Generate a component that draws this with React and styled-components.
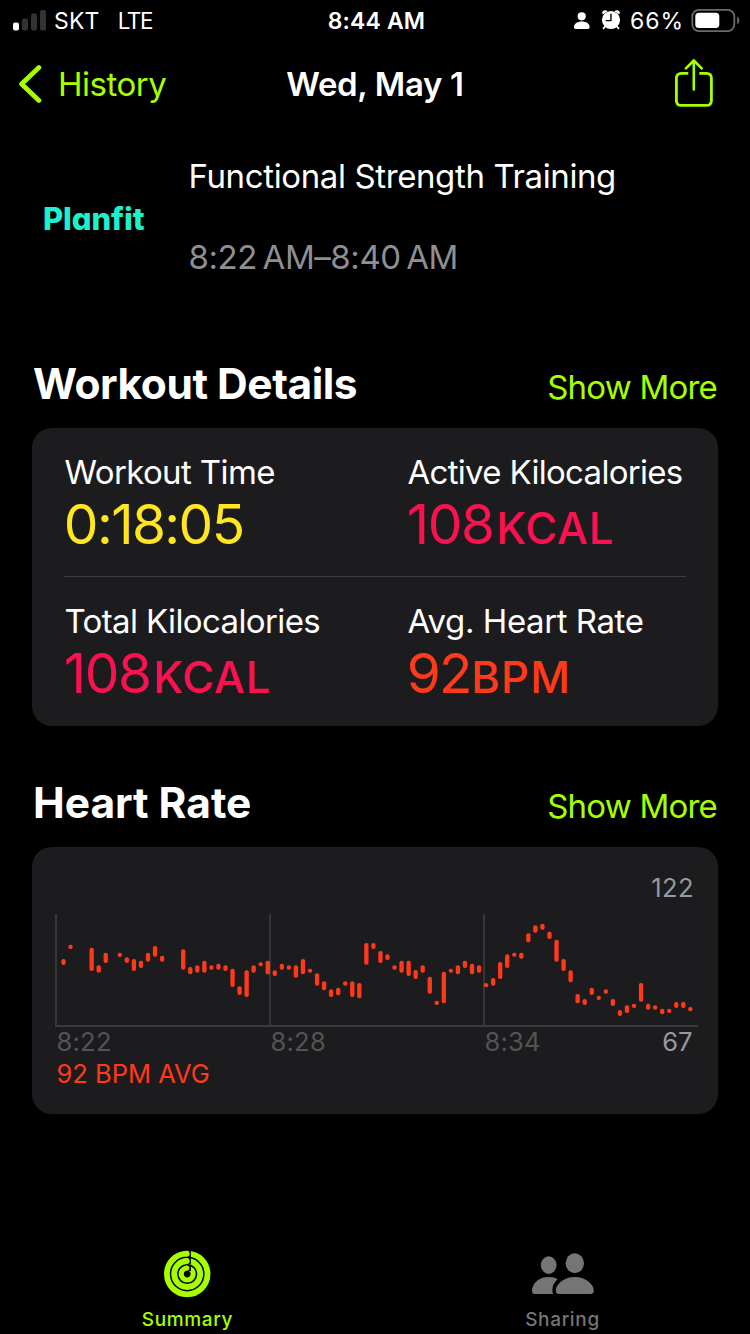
import React from "react";
import styled, {createGlobalStyle} from 'styled-components'

const GREEN = '#a6ff00';
const PINK = '#fa114f';
const RED = '#ff3a1b';
const YELLOW = '#ffe620';

// slot, top, bottom - slots are 21.13 units apart
const heartRate = [
    [0, 177, 195], [1, 134, 147], [4, 143, 213], [5, 196, 218], [6, 158, 189], [8, 158, 171], [9, 172, 189],
    [10, 177, 213], [11, 182, 204], [12, 158, 185], [13, 138, 170], [14, 167, 185], [17, 148, 209],
    [18, 201, 223], [19, 196, 218], [20, 182, 218], [21, 196, 209], [22, 191, 209], [23, 196, 213],
    [24, 206, 261], [25, 259, 285], [26, 211, 291], [27, 196, 218], [28, 187, 199], [29, 182, 223],
    [30, 211, 228], [31, 191, 209], [32, 196, 209], [33, 196, 233], [34, 177, 223], [35, 206, 218],
    [36, 220, 257], [37, 244, 271], [38, 268, 291], [39, 263, 286], [40, 244, 257], [41, 244, 291],
    [42, 249, 295], [43, 129, 194], [44, 129, 147], [45, 153, 189], [46, 163, 180], [47, 196, 209],
    [48, 182, 218], [49, 182, 228], [50, 210, 237], [51, 196, 218], [52, 230, 281], [53, 302, 315],
    [54, 215, 310], [55, 206, 218], [56, 196, 223], [57, 182, 204], [58, 191, 223], [59, 196, 218],
    [60, 249, 262], [61, 234, 257], [62, 186, 237], [63, 163, 204], [64, 158, 170], [65, 158, 176],
    [66, 100, 127], [67, 76, 98], [68, 71, 89], [69, 95, 117], [70, 119, 185], [71, 177, 213],
    [72, 211, 247], [73, 282, 310], [74, 297, 315], [75, 263, 285], [76, 287, 300], [77, 268, 281],
    [78, 297, 318], [79, 330, 348], [80, 316, 339], [81, 311, 324], [82, 249, 305], [83, 311, 329],
    [84, 316, 329], [85, 326, 343], [86, 326, 339], [87, 306, 324], [88, 306, 324], [89, 321, 334],
];

const SignalIcon = () => (
    <svg width="34" height="22" viewBox="0 0 34 22">
        <rect x="0" y="12.5" width="6" height="8" rx="2" fill="#fff" />
        <rect x="9" y="8.5" width="6" height="12" rx="2" fill="#333" />
        <rect x="18" y="3.5" width="6" height="17" rx="2" fill="#333" />
        <rect x="27" y="0" width="6" height="20.5" rx="2" fill="#333" />
    </svg>
);

const StatusIcons = () => (
    <svg width="50" height="24" viewBox="572 9 50 24">
        <circle cx="581.7" cy="16.3" r="4.1" fill="#fff" />
        <path d="M574 27.2C574 23.6 577.4 21.5 581.8 21.5S589.6 23.6 589.6 27.2Q589.6 29 588 29H575.6Q574 29 574 27.2Z" fill="#fff" />
        <circle cx="611" cy="20" r="9.1" fill="#fff" />
        <path d="M602.6 14.4Q601.4 11.4 604 10.5Q605.8 9.9 607.6 11.2ZM619.4 14.4Q620.6 11.4 618 10.5Q616.2 9.9 614.4 11.2Z" fill="#fff" />
        <path d="M605.5 26L603.5 28.3M616.5 26L618.5 28.3" stroke="#fff" strokeWidth="1.8" strokeLinecap="round" />
        <path d="M611 14.3V20.6H606.2" stroke="#000" strokeWidth="1.4" fill="none" strokeLinecap="round" strokeLinejoin="round" />
    </svg>
);

const BatteryIcon = () => (
    <svg width="49" height="24" viewBox="0 0 49 24">
        <rect x="1.3" y="0.9" width="42" height="21.2" rx="6.5" fill="none" stroke="#6b6b6b" strokeWidth="1.8" />
        <rect x="4.3" y="3.7" width="24" height="15.4" rx="3.6" fill="#fff" />
        <path d="M46.2 7.6Q48.3 8.8 48.3 11.4T46.2 15.2Z" fill="#6b6b6b" />
    </svg>
);

const BackIcon = () => (
    <svg width="24" height="40" viewBox="0 0 24 40">
        <path d="M19.9 3.6L2.6 20L19.9 36.4" fill="none" stroke={GREEN} strokeWidth="4.8" strokeLinecap="round" strokeLinejoin="round" />
    </svg>
);

const ShareIcon = () => (
    <svg width="40" height="50" viewBox="0 1 40 50">
        <path d="M14.3 15.4H7.4Q2.4 15.4 2.4 20.4V42.4Q2.4 47.4 7.4 47.4H32.4Q37.4 47.4 37.4 42.4V20.4Q37.4 15.4 32.4 15.4H25.3" fill="none" stroke={GREEN} strokeWidth="2.8" />
        <path d="M19.8 31.4V3M11.9 10.4L19.8 2.5L27.7 10.4" fill="none" stroke={GREEN} strokeWidth="2.6" strokeLinecap="round" strokeLinejoin="round" />
    </svg>
);

const RingsIcon = () => (
    <svg width="48" height="48" viewBox="-23.2 -24 48 48">
        {[[20.3, 5.8], [13, 5.8], [6, 5.2]].map(([r, w]) => (
            <g key={r}>
                <circle r={r} fill="none" stroke={GREEN} strokeWidth={w} />
                <rect x="-0.3" y={-r - w / 2 - 0.4} width="4" height={w + 0.9} fill="#000" />
                <circle cx="-0.4" cy={-r} r={w / 2} fill={GREEN} />
            </g>
        ))}
    </svg>
);

const PeopleIcon = () => (
    <svg width="64" height="44" viewBox="0 0 64 44">
        <g fill="#757575">
            <ellipse cx="17.7" cy="15.1" rx="7.9" ry="8.8" />
            <path d="M1 41Q1 35 6.4 30.6T18.4 27Q23.4 27 26.8 29.2Q21.3 33.2 21.3 40.4Q21.3 43 22.4 44H3.8Q1 44 1 41Z" />
            <ellipse cx="43.8" cy="13.3" rx="9.2" ry="10" />
            <path d="M24.8 40.8Q24.8 35.6 30.4 31.3T43.8 27T57.2 31.3T62.8 40.8Q62.8 44 59.4 44H28.2Q24.8 44 24.8 40.8Z" />
        </g>
    </svg>
);

const HeartRateChart = () => (
    <Chart viewBox="0 39 1929 342">
        <path d="M3 42V375M645 42V375M1287 42V375" stroke="#3a3a3c" strokeWidth="5.4" />
        <path d="M0 378H1929" stroke="#3a3a3c" strokeWidth="5.4" />
        {heartRate.map(([slot, top, bottom]) => (
            <rect key={slot} x={19 + slot * 21.13} y={top} width="13" height={bottom - top} rx="6" fill={RED} />
        ))}
    </Chart>
);

const Metric = ({label, value, unit, color, spacing, unitGap}) => (
    <MetricCell>
        <MetricLabel $spacing={spacing[0]}>{label}</MetricLabel>
        <MetricValue $color={color} $spacing={spacing[1]}>
            {value}{unit && <Unit $gap={unitGap} $spacing={spacing[2]}>{unit}</Unit>}
        </MetricValue>
    </MetricCell>
);

export default function App() {
    return <Screen>
        <GlobalStyle />
        <StatusBar>
            <StatusSide>
                <SignalIcon />
                <Carrier>SKT</Carrier>
                <Network>LTE</Network>
            </StatusSide>
            <Clock>8:44 AM</Clock>
            <StatusSide $end>
                <StatusIcons />
                <Percent>66%</Percent>
                <BatteryIcon />
            </StatusSide>
        </StatusBar>
        <NavBar>
            <BackLink><BackIcon />History</BackLink>
            <NavTitle>Wed, May 1</NavTitle>
            <NavAction><ShareIcon /></NavAction>
        </NavBar>

        <WorkoutHeader>
            <Logo>Planfit</Logo>
            <WorkoutInfo>
                <WorkoutName>Functional Strength Training</WorkoutName>
                <WorkoutHours>8:22{'\u202F'}AM–8:40{'\u202F'}AM</WorkoutHours>
            </WorkoutInfo>
        </WorkoutHeader>

        <SectionHeader>
            <SectionTitle $spacing={-0.47}>Workout Details</SectionTitle>
            <ShowMore>Show More</ShowMore>
        </SectionHeader>
        <DetailsCard>
            <MetricRow>
                <Metric label="Workout Time" value="0:18:05" color={YELLOW} spacing={[-0.62, -1.6]} />
                <Metric label="Active Kilocalories" value="108" unit="KCAL" color={PINK} spacing={[-0.7, -1.4, 0.8]} unitGap={2.5} />
            </MetricRow>
            <MetricRow>
                <Metric label="Total Kilocalories" value="108" unit="KCAL" color={PINK} spacing={[-0.62, -1.4, 0.8]} unitGap={2.5} />
                <Metric label="Avg. Heart Rate" value="92" unit="BPM" color={RED} spacing={[-0.43, -2, 1.3]} unitGap={0.7} />
            </MetricRow>
        </DetailsCard>

        <SectionHeader>
            <SectionTitle $spacing={-0.05}>Heart Rate</SectionTitle>
            <ShowMore>Show More</ShowMore>
        </SectionHeader>
        <ChartCard>
            <MaxRate>122</MaxRate>
            <HeartRateChart />
            <Axis>
                <Tick>8:22</Tick>
                <Tick>8:28</Tick>
                <Tick>8:34</Tick>
                <MinRate>67</MinRate>
            </Axis>
            <Average>92 BPM AVG</Average>
        </ChartCard>

        <TabBar>
            <Tab $active>
                <RingsIcon />
                <TabLabel>Summary</TabLabel>
            </Tab>
            <Tab>
                <PeopleIcon />
                <TabLabel>Sharing</TabLabel>
            </Tab>
        </TabBar>
    </Screen>
}

const GlobalStyle = createGlobalStyle`
    body {
        margin: 0;
        background: #000;
    }
    * {
        box-sizing: border-box;
    }
    svg {
        display: block;
        flex: none;
    }
`;

const Screen = styled.div`
    display: flex;
    flex-direction: column;
    width: 750px;
    height: 1334px;
    overflow: hidden;
    background: #000;
    color: #fff;
    font-family: Inter, "Liberation Sans", sans-serif;
    white-space: nowrap;
`;

const StatusBar = styled.div`
    display: grid;
    grid-template-columns: 1fr auto 1fr;
    align-items: center;
    height: 41px;
    padding: 0 10px 0 13px;
    font-size: 23px;
    line-height: 40px;
`;

const StatusSide = styled.div`
    display: flex;
    align-items: center;
    justify-content: ${props => props.$end ? 'flex-end' : 'flex-start'};
    height: 40px;
`;

const Carrier = styled.span`
    margin-left: 7px;
    letter-spacing: 0.2px;
`;

const Network = styled.span`
    margin-left: 18px;
    font-size: 22.5px;
    letter-spacing: -1.4px;
`;

const Clock = styled.div`
    font-weight: 600;
    letter-spacing: 0.15px;
`;

const Percent = styled.span`
    margin: 0 7px 0 8px;
    letter-spacing: 1px;
`;

const NavBar = styled.div`
    display: grid;
    grid-template-columns: 1fr auto 1fr;
    align-items: center;
    height: 86px;
    padding: 0 36px 0 19px;
    font-size: 33px;
`;

const BackLink = styled.div`
    display: flex;
    align-items: center;
    gap: 15px;
    color: ${GREEN};
    letter-spacing: -0.5px;
`;

const NavTitle = styled.div`
    padding-left: 17px;
    font-weight: 600;
    letter-spacing: -0.33px;
`;

const NavAction = styled.div`
    display: flex;
    justify-content: flex-end;
`;

const WorkoutHeader = styled.div`
    display: flex;
    height: 207px;
    padding: 29px 0 0 43px;
`;

const Logo = styled.div`
    width: 145.5px;
    padding-top: 43px;
    color: #1df0cb;
    font-size: 31px;
    font-weight: 800;
    line-height: 40px;
    letter-spacing: -0.1px;
    font-feature-settings: "cv11";
`;

const WorkoutInfo = styled.div`
    display: flex;
    flex-direction: column;
    gap: 41px;
    font-size: 33px;
    line-height: 40px;
`;

const WorkoutName = styled.div`
    letter-spacing: -0.38px;
`;

const WorkoutHours = styled.div`
    color: #8e8e93;
    letter-spacing: -0.43px;
`;

const SectionHeader = styled.div`
    display: flex;
    align-items: center;
    justify-content: space-between;
    height: 94px;
    padding: 6px 33px 0 33px;
`;

const SectionTitle = styled.h2`
    margin: 0;
    font-size: 42.5px;
    font-weight: 700;
    line-height: 50px;
    letter-spacing: ${props => props.$spacing}px;
`;

const ShowMore = styled.div`
    padding-top: 5px;
    color: ${GREEN};
    font-size: 33px;
    line-height: 40px;
    letter-spacing: -0.78px;
`;

const Card = styled.div`
    margin: 0 32px;
    border-radius: 20px;
    background: #1c1c1e;
`;

const DetailsCard = styled(Card)`
    height: 298px;
    padding: 0 32px;
    margin-bottom: 27px;
`;

const MetricRow = styled.div`
    display: grid;
    grid-template-columns: 343px 1fr;
    height: 148px;
    padding-top: 24px;

    & + & {
        height: 149px;
        border-top: 1px solid #3d3d40;
    }
`;

const MetricCell = styled.div`
    padding-left: 0.5px;
`;

const MetricLabel = styled.div`
    font-size: 33px;
    line-height: 40px;
    letter-spacing: ${props => props.$spacing}px;
`;

const MetricValue = styled.div`
    margin-left: -0.7px;
    color: ${props => props.$color};
    font-size: 55px;
    line-height: 64px;
    letter-spacing: ${props => props.$spacing}px;
`;

const Unit = styled.span`
    margin-left: ${props => props.$gap}px;
    font-size: 43.5px;
    font-weight: 500;
    letter-spacing: ${props => props.$spacing}px;
`;

const ChartCard = styled(Card)`
    height: 267px;
    padding: 25px 20px 0 23px;
    font-size: 25.5px;
    line-height: 32px;
`;

const MaxRate = styled.div`
    height: 41px;
    padding-right: 4px;
    color: #98989f;
    text-align: right;
    letter-spacing: 0.4px;
`;

const Chart = styled.svg`
    width: 643px;
    height: 114px;
`;

const Axis = styled.div`
    display: grid;
    grid-template-columns: 214px 214px 1fr auto;
    height: 32px;
    margin-top: -1px;
    padding: 0 5.5px 0 1.5px;
    color: #545456;
`;

const Tick = styled.div`
    letter-spacing: 0.25px;
`;

const MinRate = styled.div`
    color: #98989f;
`;

const Average = styled.div`
    padding-left: 1.5px;
    color: ${RED};
`;

const TabBar = styled.div`
    display: grid;
    grid-template-columns: 1fr 1fr;
    height: 84px;
    margin-top: auto;
`;

const Tab = styled.div`
    display: flex;
    flex-direction: column;
    align-items: center;
    color: ${props => props.$active ? GREEN : '#757575'};

    svg {
        margin-bottom: ${props => props.$active ? 9 : 13}px;
    }
`;

const TabLabel = styled.div`
    font-size: 19px;
    font-weight: 500;
    line-height: 26px;
    letter-spacing: 0.65px;
`;
